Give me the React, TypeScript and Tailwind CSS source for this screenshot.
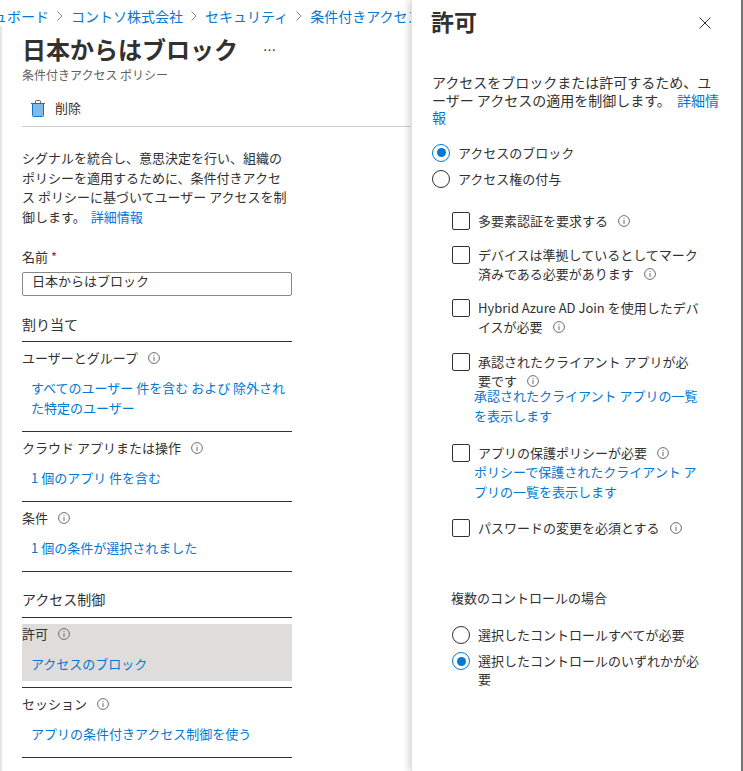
import React from 'react';

const FONT = "font-['Noto_Sans_CJK_JP','Noto_Sans',sans-serif]";

const InfoIcon = ({ className = '' }: { className?: string }) => (
  <svg width="12" height="12" viewBox="0 0 12 12" fill="none" className={`shrink-0 inline-block ${className}`}>
    <circle cx="6" cy="6" r="5.4" stroke="#6f6d6b" strokeWidth="1" />
    <rect x="5.5" y="5" width="1" height="4" fill="#6f6d6b" />
    <rect x="5.5" y="3" width="1" height="1" fill="#6f6d6b" />
  </svg>
);

const Chevron = () => (
  <svg width="8" height="12" viewBox="0 0 8 12" fill="none" className="shrink-0">
    <path d="M1.5 1.5 6 6l-4.5 4.5" stroke="#8a8886" strokeWidth="1" />
  </svg>
);

const TrashIcon = () => (
  <svg width="14" height="17" viewBox="0 0 14 17" fill="none">
    <rect x="2" y="4" width="10" height="12" fill="#83b9e5" />
    <path d="M1.5 3.5v12a1 1 0 0 0 1 1h9a1 1 0 0 0 1-1v-12" stroke="#0078d4" strokeWidth="1" />
    <path d="M0 3.5h14M4.5 3V1.5a1 1 0 0 1 1-1h3a1 1 0 0 1 1 1V3" stroke="#605e5c" strokeWidth="1" />
  </svg>
);

const Radio = ({ checked = false }: { checked?: boolean }) => (
  <span className={`w-[18px] h-[18px] rounded-full border shrink-0 flex items-center justify-center ${checked ? 'border-[#0078d4]' : 'border-[#323130]'}`}>
    {checked && <span className="w-[9px] h-[9px] rounded-full bg-[#0078d4]" />}
  </span>
);

const CheckBox = () => (
  <span className="w-[18px] h-[18px] rounded-[2px] border border-[#323130] shrink-0 block" />
);

interface SectionProps {
  label: string;
  link: string;
  active?: boolean;
}

const Section = ({ label, link, active }: SectionProps) => (
  <div className="border-b border-[#323130] py-[6px]">
    <div className={active ? 'bg-[#dfdddb]' : ''}>
      <div className="h-5 leading-5 flex items-center gap-[10px]">
        {label}
        <InfoIcon />
      </div>
      <div className="mt-[10px] pb-[7px] pl-[9px] leading-5 text-[#0078d4]">{link}</div>
    </div>
  </div>
);

interface GrantOption {
  label: string;
  link?: string;
  gap: string;
  linkGap?: string;
}

const GRANT_OPTIONS: GrantOption[] = [
  { label: '多要素認証を要求する', gap: 'mt-[24px]' },
  { label: 'デバイスは準拠しているとしてマーク済みである必要があります', gap: 'mt-[16px]' },
  { label: 'Hybrid Azure AD Join を使用したデバイスが必要', gap: 'mt-[16px]' },
  { label: '承認されたクライアント アプリが必要です', link: '承認されたクライアント アプリの一覧を表示します', gap: 'mt-[17px]', linkGap: '-mt-[4px]' },
  { label: 'アプリの保護ポリシーが必要', link: 'ポリシーで保護されたクライアント アプリの一覧を表示します', gap: 'mt-[18px]', linkGap: '-mt-[1px]' },
  { label: 'パスワードの変更を必須とする', gap: 'mt-[17px]' },
];

export default function App() {
  return (
    <div className={`${FONT} flex w-[743px] h-[771px] overflow-hidden bg-white text-[13px] text-[#323130]`}>
      {/* Left blade */}
      <div className="w-[411px] shrink-0 overflow-hidden flex flex-col">
        <div className="h-[26px] pt-[6px] flex items-center gap-[7px] -ml-[49px] whitespace-nowrap text-[14px] leading-5 text-[#0078d4]">
          <span>ダッシュボード</span>
          <Chevron />
          <span>コントソ株式会社</span>
          <Chevron />
          <span>セキュリティ</span>
          <Chevron />
          <span>条件付きアクセス</span>
        </div>

        <div className="flex-1 border-l-2 border-[#e6e6e6] pl-[20px]">
          <div className="flex items-center h-[36px] mt-[5px]">
            <h1 className="text-[24px] leading-[36px] font-bold">日本からはブロック</h1>
            <span className="ml-[25px] text-[13px] leading-none">…</span>
          </div>
          <div className="text-[12px] leading-4 text-[#605e5c]">条件付きアクセス ポリシー</div>

          <div className="flex items-center h-5 mt-[15px] pl-[9px] gap-[10px]">
            <TrashIcon />
            <span>削除</span>
          </div>
          <div className="h-px bg-[#d2d0ce] mt-[8px]" />

          <p className="w-[270px] mt-[21px] leading-[19.5px]">
            シグナルを統合し、意思決定を行い、組織のポリシーを適用するために、条件付きアクセス ポリシーに基づいてユーザー アクセスを制御します。 <span className="ml-[2px] text-[#0078d4]">詳細情報</span>
          </p>

          <div className="w-[270px]">
            <div className="mt-[21px] leading-5">
              名前 <span className="text-[#a4262c]">*</span>
            </div>
            <div className="mt-[5px] h-[24px] border border-[#8a8886] rounded-[2px] pl-[9px] leading-[16px]">日本からはブロック</div>

            <div className="mt-[18px] text-[14px] leading-5 pb-[7px] border-b border-[#323130]">割り当て</div>
            <Section label="ユーザーとグループ" link="すべてのユーザー 件を含む および 除外された特定のユーザー" />
            <Section label="クラウド アプリまたは操作" link="1 個のアプリ 件を含む" />
            <Section label="条件" link="1 個の条件が選択されました" />

            <div className="mt-[17px] text-[14px] leading-5 pb-[8px] border-b border-[#323130]">アクセス制御</div>
            <Section label="許可" link="アクセスのブロック" active />
            <Section label="セッション" link="アプリの条件付きアクセス制御を使う" />
          </div>
        </div>
      </div>

      {/* Right panel */}
      <div className="w-[332px] shrink-0 relative z-10 border-l border-r-2 border-l-[#e1e1e1] border-r-[#757575] shadow-[-3px_0_6px_rgba(0,0,0,0.14)] pl-[20px] bg-white">
        <div className="flex items-start justify-between h-[38px] pr-[30px]">
          <h2 className="text-[23px] font-bold leading-[44px] h-[38px] -mt-[1px] -ml-px">許可</h2>
          <svg width="12" height="12" viewBox="0 0 12 12" fill="none" className="mt-[17px]">
            <path d="M.5.5l11 11M11.5.5l-11 11" stroke="#323130" strokeWidth="1" />
          </svg>
        </div>

        <p className="w-[290px] mt-[36px] text-[14px] leading-[17.5px]">
          アクセスをブロックまたは許可するため、ユーザー アクセスの適用を制御します。 <span className="ml-[3px] text-[#0078d4]">詳細情報</span>
        </p>

        <div className="mt-[17px] flex flex-col gap-[8px]">
          <label className="flex items-center gap-2 h-[18px]"><Radio checked />アクセスのブロック</label>
          <label className="flex items-center gap-2 h-[18px]"><Radio />アクセス権の付与</label>
        </div>

        <div className="ml-[20px] w-[256px]">
          {GRANT_OPTIONS.map((opt) => (
            <div key={opt.label} className={opt.gap}>
              <div className="flex gap-2">
                <CheckBox />
                <div className="leading-[18.5px] w-[222px]">
                  {opt.label}
                  <InfoIcon className="ml-[10px] align-[-1px]" />
                </div>
              </div>
              {opt.link && <div className={`ml-[22px] leading-5 text-[#0078d4] w-[232px] ${opt.linkGap}`}>{opt.link}</div>}
            </div>
          ))}

          <div className="mt-[51px] leading-5 -ml-px">複数のコントロールの場合</div>
          <div className="mt-[18px] flex flex-col gap-[8px]">
            <label className="flex items-center gap-2 h-[18px]"><Radio />選択したコントロールすべてが必要</label>
            <label className="flex items-start gap-2 leading-[18px]"><Radio checked /><span className="w-[224px]">選択したコントロールのいずれかが必要</span></label>
          </div>
        </div>
      </div>
    </div>
  );
}
